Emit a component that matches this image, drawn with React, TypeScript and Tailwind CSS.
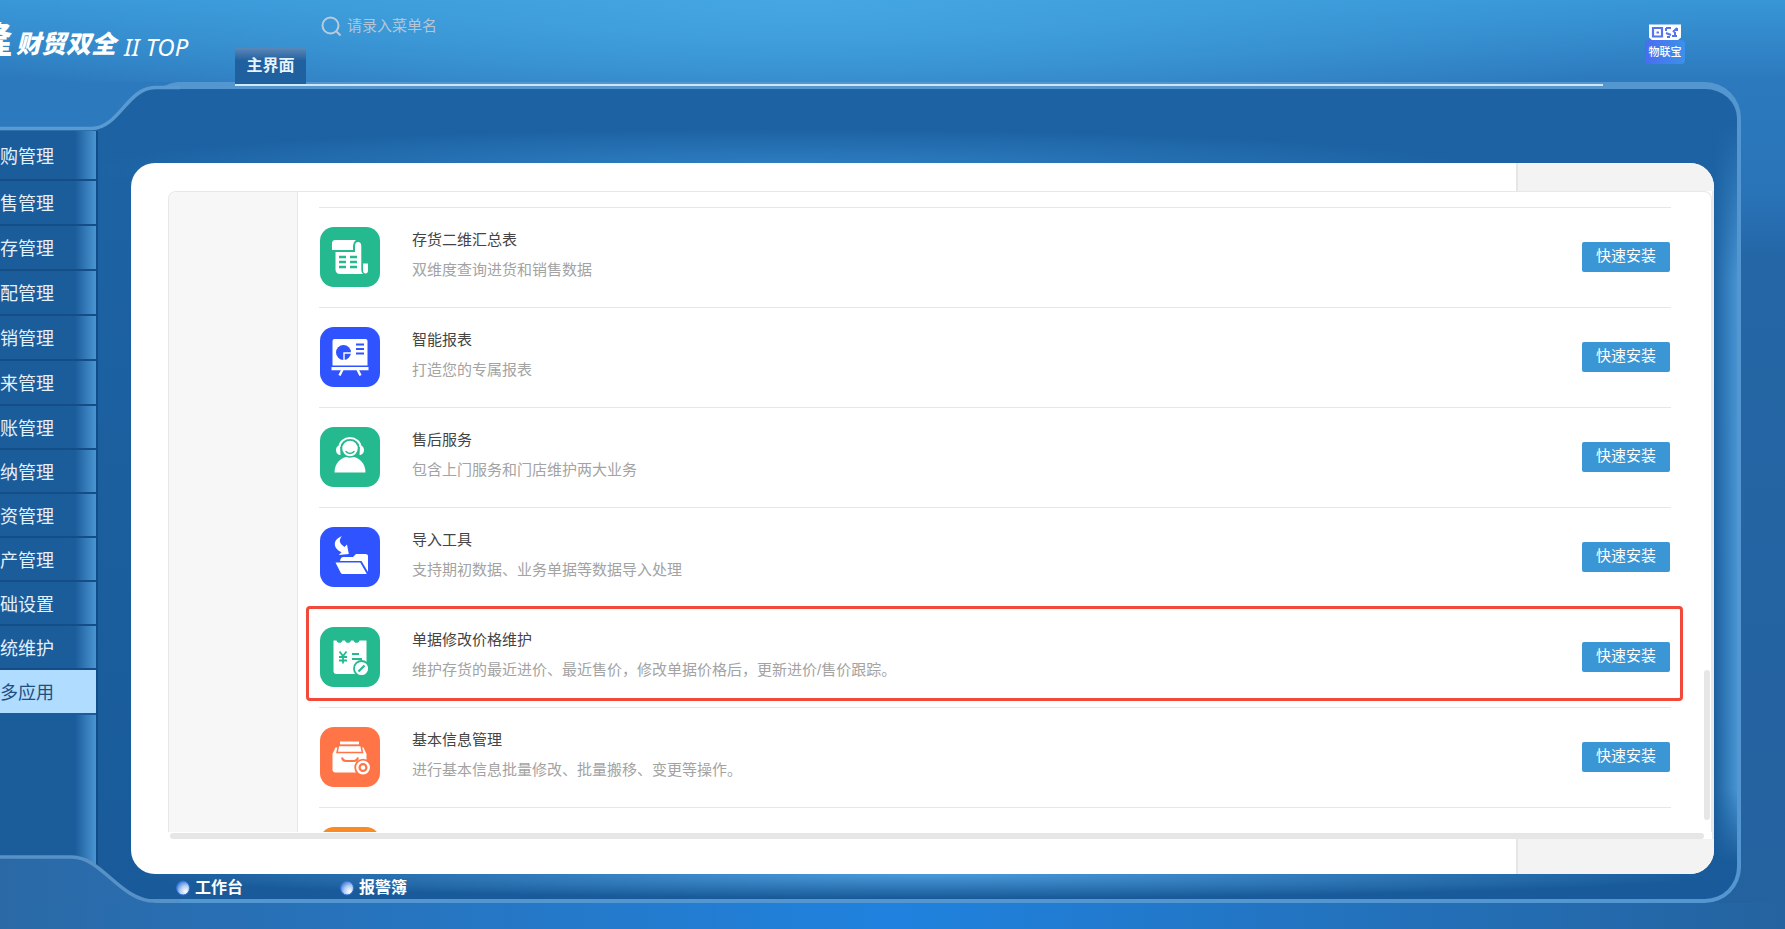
import React from 'react';

interface AppItem {
  name: string;
  desc: string;
  color: string;
  icon: React.ReactNode;
  highlighted?: boolean;
}

const menuItems = [
  { label: '购管理', height: 'h-[50px]' },
  { label: '售管理', height: 'h-[45px]' },
  { label: '存管理', height: 'h-[45px]' },
  { label: '配管理', height: 'h-[45px]' },
  { label: '销管理', height: 'h-[45px]' },
  { label: '来管理', height: 'h-[45px]' },
  { label: '账管理', height: 'h-11' },
  { label: '纳管理', height: 'h-11' },
  { label: '资管理', height: 'h-11' },
  { label: '产管理', height: 'h-11' },
  { label: '础设置', height: 'h-11' },
  { label: '统维护', height: 'h-11' },
  { label: '多应用', height: 'h-[45px]', active: true },
];

const ReceiptIcon = () => (
  <svg viewBox="0 0 60 60" className="size-full" fill="#fff" aria-hidden="true">
    <path d="M15 13h21c-2 1.500-3 4-3 6.500V23H12v-6.500c0-2 1-3.500 3-3.500z" />
    <path d="M35 23v-4c0-2.500 1-4 3-4s3.300 1.500 3.300 4v23.500c0 2 .7 3.500 1.700 4.500H20c-2.800 0-4.500-1.700-4.500-4.500V25H35z" />
    <path d="M43 36.500h5v7c0 2-1 3-2.500 3S43 45.500 43 43.500z" />
    <path d="M19 30h7M30 30h7M19 35h7M30 35h7M19 40h7M30 40h7" stroke="#24b98f" strokeWidth="2.400" />
  </svg>
);

const ReportIcon = () => (
  <svg viewBox="0 0 60 60" className="size-full" fill="#fff" aria-hidden="true">
    <path d="M14.500 12h31a2 2 0 0 1 2 2v24.500h-35V14a2 2 0 0 1 2-2z" />
    <path d="M11.500 40h37v3.200h-37z" />
    <path d="M22.500 42.500l-3 6M37.500 42.500l3 6" stroke="#fff" strokeWidth="2.400" />
    <circle cx="23.500" cy="25.500" r="7.500" fill="#2f54ff" />
    <path d="M24 33v-7h8" stroke="#fff" strokeWidth="1.400" fill="none" />
    <path d="M36 17.500h8M36 22h8M36 26.500h8" stroke="#2f54ff" strokeWidth="2" />
  </svg>
);

const ServiceIcon = () => (
  <svg viewBox="0 0 60 60" className="size-full" fill="#fff" aria-hidden="true">
    <path d="M14.500 45.500c0-9 6-16 15.500-16s15.500 7 15.500 16z" />
    <circle cx="30" cy="21.500" r="8.500" stroke="#24b98f" strokeWidth="1.500" />
    <path d="M19.500 20a10.500 9 0 0 1 21 0" fill="none" stroke="#fff" strokeWidth="2" />
    <path d="M20 18.500c-2.500 0-4 2-4 4.500s1.500 5 4.500 5zM40 18.500c2.500 0 4 2 4 4.500s-1.500 5-4.500 5z" />
    <path d="M26 24.500c2 2.500 6 2.500 8 0" fill="none" stroke="#24b98f" strokeWidth="1.500" strokeLinecap="round" />
  </svg>
);

const ImportIcon = () => (
  <svg viewBox="0 0 60 60" className="size-full" fill="#fff" aria-hidden="true">
    <path d="M22 9c-2.500 3-3 5.500-.5 8.500l3 2.500 2.500-2.500 1.800 9.500-10 1 2.700-2.700c-4-2-6.700-4.800-6.700-8.300C14.800 13.500 18 10.500 22 9z" />
    <path d="M20 34c.5-2.800 1.500-4 3.500-4h9.500l3-3h9.500c1.500 0 2.500.8 2.500 2.300V45l-6.500-11z" />
    <path d="M15.500 35.500h24.800l6.500 11.500H23c-1.200 0-1.800-.5-2.300-1.300z" />
  </svg>
);

const PriceIcon = () => (
  <svg viewBox="0 0 60 60" className="size-full" fill="#fff" aria-hidden="true">
    <path d="M13.500 13.500h3c.5 1.500 1.500 2.300 3 2.300s2.500-.8 3-2.300h2.500c.5 1.500 1.500 2.300 3 2.300s2.500-.8 3-2.300h2.500c.5 1.500 1.500 2.300 3 2.300s2.500-.8 3-2.300H46.500V47h-30c-2 0-3-1-3-3z" />
    <path d="M19.500 24.500l3.500 4.500 3.500-4.500M23 29v7.500M19 30h8M19 33.500h8" stroke="#24b98f" strokeWidth="1.800" fill="none" />
    <path d="M32 27h7M32 32h10" stroke="#24b98f" strokeWidth="2.200" />
    <circle cx="41.500" cy="41.500" r="7.500" stroke="#24b98f" strokeWidth="1.800" />
    <path d="M38.500 44.500l6-6" stroke="#24b98f" strokeWidth="2.200" />
  </svg>
);

const ArchiveIcon = () => (
  <svg viewBox="0 0 60 60" className="size-full" fill="#fff" aria-hidden="true">
    <path d="M20 14.500h19V17.500H20z" />
    <path d="M12.500 27l3-6.500h28l3 6.500v18.500h-31c-2 0-3-1-3-3z" />
    <path d="M18.500 18.500h22.500l1.500 7H17z" stroke="#ff7547" strokeWidth="1.500" />
    <path d="M22 30.500c.5 2.500 2 3.500 4 3.500h8c2 0 3.500-1 4-3.500" fill="none" stroke="#ff7547" strokeWidth="2" />
    <circle cx="43" cy="40.500" r="7.800" stroke="#ff7547" strokeWidth="1.800" />
    <circle cx="43" cy="40.500" r="3.400" fill="none" stroke="#ff7547" strokeWidth="2.200" />
  </svg>
);

const apps: AppItem[] = [
  { name: '存货二维汇总表', desc: '双维度查询进货和销售数据', color: 'bg-[#24b98f]', icon: <ReceiptIcon /> },
  { name: '智能报表', desc: '打造您的专属报表', color: 'bg-[#2f54ff]', icon: <ReportIcon /> },
  { name: '售后服务', desc: '包含上门服务和门店维护两大业务', color: 'bg-[#24b98f]', icon: <ServiceIcon /> },
  { name: '导入工具', desc: '支持期初数据、业务单据等数据导入处理', color: 'bg-[#2f54ff]', icon: <ImportIcon /> },
  {
    name: '单据修改价格维护',
    desc: '维护存货的最近进价、最近售价，修改单据价格后，更新进价/售价跟踪。',
    color: 'bg-[#24b98f]',
    icon: <PriceIcon />,
    highlighted: true,
  },
  { name: '基本信息管理', desc: '进行基本信息批量修改、批量搬移、变更等操作。', color: 'bg-[#ff7547]', icon: <ArchiveIcon /> },
];

const Header = () => (
  <header className="flex h-[82px] shrink-0 items-start">
    <div className="flex h-[82px] w-[235px] shrink-0 items-center overflow-hidden pt-2 whitespace-nowrap text-white">
      <span className="-ml-6 pb-2 text-4xl font-black">隆</span>
      <span className="ml-1 text-[25px] font-black italic">财贸双全</span>
      <span className="ml-2 pt-1 font-['Noto_Sans',sans-serif] text-2xl italic">II TOP</span>
    </div>
    <button className="z-10 mt-12 h-[38px] w-[71px] shrink-0 border-b-2 border-[#d3e8f8] bg-linear-to-b from-[#5a88b8] via-[#21609f] via-35% to-[#1f609f] text-base font-bold text-[#e6f2fc]">
      主界面
    </button>
    <label className="mt-3 ml-[15px] flex h-7 items-center gap-[5px]">
      <svg viewBox="0 0 21 21" className="size-[21px]" fill="none" stroke="#b9cbdc" strokeWidth="2" aria-hidden="true">
        <circle cx="9.500" cy="9.500" r="8" />
        <path d="M15.500 15.500l4 4" />
      </svg>
      <input
        type="text"
        aria-label="菜单名"
        placeholder="请录入菜单名"
        className="w-60 bg-transparent text-[15px] text-white outline-none placeholder:text-[#b3c6d9]"
      />
    </label>
    <button className="mt-6 mr-[100px] ml-auto flex h-10 w-10 flex-col items-center" aria-label="物联宝">
      <svg viewBox="0 0 32 16" className="h-4 w-8 shrink-0" aria-hidden="true">
        <path d="M0 .5h32v13l-3 2.500H3L0 13.500z" fill="#fff" />
        <path d="M4 4h9v8.500H4z" fill="none" stroke="#5873ee" strokeWidth="2.200" />
        <path d="M7.500 7.500h2.500v2H7.500z" fill="#5873ee" />
        <path d="M17 4h5M17 4v3M24 8l4-4M28 4v3M17 9l5 2M18 13h3M23 12h5M26 8v5" fill="none" stroke="#5873ee" strokeWidth="2" />
      </svg>
      <span className="flex h-6 w-10 items-center justify-center rounded-sm bg-linear-to-r from-[#4a6cf0] to-[#3b90ea] text-[11px] font-medium text-white">
        物联宝
      </span>
    </button>
  </header>
);

const Sidebar = () => (
  <nav className="relative mt-[49px] mb-1 flex w-[98px] shrink-0 flex-col border-r-2 border-[#124c86] bg-linear-to-r from-[#1b5c9b] from-78% to-[#4a96d2]">
    {menuItems.map(item => (
      <a
        key={item.label}
        href="#"
        className={`flex shrink-0 items-center border-b-2 pt-1 text-[18px] ${item.height} ${
          item.active ? 'border-[#1d5c9b] bg-[#b0dcff] text-[#1f4f82]' : 'border-[#154d87] text-[#e4f0fb]'
        }`}
      >
        {item.label}
      </a>
    ))}
  </nav>
);

const InstallRow = ({ item }: { item: AppItem }) => (
  <li className="relative flex h-[100px] shrink-0 items-center border-t border-[#e6e6e6] px-px pb-px">
    {item.highlighted && (
      <div className="pointer-events-none absolute -top-0.5 -right-3 -left-[13px] h-[95px] rounded-sm border-3 border-[#f2493d]" />
    )}
    <div className={`size-[60px] rounded-[14px] ${item.color}`}>{item.icon}</div>
    <div className="ml-8 flex-1 pb-1 text-[15px] leading-[30px]">
      <h3 className="text-[#444]">{item.name}</h3>
      <p className="text-[#a3a3a3]">{item.desc}</p>
    </div>
    <button className="h-[30px] w-[88px] rounded-xs bg-[#3b96d6] pb-0.5 text-[15px] text-white">快速安装</button>
  </li>
);

const BottomLink = ({ label }: { label: string }) => (
  <a href="#" className="flex w-[164px] items-center gap-[5px] text-base font-bold text-white">
    <svg viewBox="0 0 14 16" className="h-4 w-3.5" aria-hidden="true">
      <defs>
        <radialGradient id="orb" cx="0.7" cy="0.75" r="0.8">
          <stop offset="0" stopColor="#fff" />
          <stop offset="0.5" stopColor="#b5cff0" />
          <stop offset="1" stopColor="#3c78d8" />
        </radialGradient>
      </defs>
      <ellipse cx="7" cy="8" rx="6.500" ry="7" fill="url(#orb)" stroke="#2f6fd8" />
    </svg>
    {label}
  </a>
);

export default function App() {
  return (
    <div className="flex h-screen flex-col overflow-hidden bg-[radial-gradient(ellipse_900px_150px_at_45%_0,#44a6e2,transparent),linear-gradient(to_bottom,#3896d6_0,#2c79bd_82px,#2974b8_190px,#2466a6_260px,#24619f_100%)] font-['Liberation_Sans','Noto_Sans_CJK_SC',sans-serif]">
      <Header />
      <div className="relative mr-11 flex min-h-0 flex-1">
        {/* dark body of the frame with its light rim */}
        <div className="absolute inset-0 rounded-r-[36px] border-t-7 border-r-4 border-b-4 border-[#5396d0] bg-[radial-gradient(ellipse_700px_40px_at_45%_80px,#2f80c4,transparent),linear-gradient(to_bottom,#1d63a4,#195b9a)]" />
        <div className="absolute top-10 right-1 bottom-10 w-6 bg-linear-to-l from-[#4793d1] to-transparent [mask-image:linear-gradient(to_bottom,transparent,#000_160px,#000_90%,transparent)]" />
        <div className="absolute top-0.5 right-[138px] left-[235px] h-0.5 bg-[#cfe6f7]" />
        <Sidebar />
        <svg viewBox="0 0 180 50" className="absolute top-0 left-0 h-[50px] w-[180px]" aria-hidden="true">
          <path d="M0 0H180C168 0 168 5 155 5C128 5 118 46 92 46H0z" fill="#2c79bd" />
          <path d="M0 46.500H92C118 46.500 128 5.500 155 5.500H180" fill="none" stroke="#5a9ad2" strokeWidth="3.500" />
        </svg>
        <svg viewBox="0 0 180 50" className="absolute bottom-0 left-0 h-[50px] w-[180px]" aria-hidden="true">
          <defs>
            <linearGradient id="baseFill" x1="0" y1="0" x2="180" y2="0" gradientUnits="userSpaceOnUse">
              <stop offset="0" stopColor="#2a69a6" />
              <stop offset="1" stopColor="#2a6eb1" />
            </linearGradient>
          </defs>
          <path d="M0 4H72C102 4 120 48 155 48V50H0z" fill="url(#baseFill)" />
          <path d="M0 4H72C102 4 120 48 155 48H180" fill="none" stroke="#5791c5" strokeWidth="3.500" />
        </svg>
        <main className="relative flex min-w-0 flex-1 flex-col pt-[81px] pr-[27px] pb-1 pl-[33px]">
          <div className="flex min-h-0 flex-1 flex-col overflow-hidden rounded-3xl bg-white">
            <div className="flex h-7 shrink-0 justify-end">
              <div className="w-[198px] border-l-2 border-[#e6e6e6] bg-[#f3f3f3]" />
            </div>
            <div className="flex min-h-0 flex-1 flex-col border-r-2 border-[#e9e9e9] pl-[37px]">
              <div className="flex min-h-0 flex-1 rounded-t-lg border border-b-0 border-[#e8e8e8]">
                <div className="w-[129px] shrink-0 rounded-tl-lg border-r border-[#e8e8e8] bg-[#f7f7f7]" />
                <ul className="mt-[15px] ml-[21px] flex min-w-0 flex-1 flex-col [clip-path:inset(0_-20px)]">
                  {apps.map(item => (
                    <InstallRow key={item.name} item={item} />
                  ))}
                  <li className="flex min-h-0 flex-1 overflow-hidden border-t border-[#e6e6e6] px-px pt-[19px]">
                    <div className="size-[60px] shrink-0 rounded-[14px] bg-[#f98a25]" />
                  </li>
                </ul>
                <div className="mr-px ml-[33px] flex w-1.5 shrink-0 flex-col justify-end pb-3">
                  <div className="h-[150px] rounded-full bg-[#e6e6e6]" />
                </div>
              </div>
              <div className="mt-px mr-2 ml-0.5 h-1.5 shrink-0 rounded-full bg-[#e6e6e6]" />
            </div>
            <div className="flex h-[35px] shrink-0 justify-end">
              <div className="w-[198px] border-l-2 border-[#e6e6e6] bg-[#f3f3f3]" />
            </div>
          </div>
          <div className="flex h-[25px] shrink-0 items-center bg-[radial-gradient(ellipse_50%_24px_at_50%_0,#4a9ada,transparent)] pt-0.5 pl-[45px]">
            <BottomLink label="工作台" />
            <BottomLink label="报警簿" />
          </div>
        </main>
      </div>
      <footer className="h-[26px] shrink-0 bg-linear-to-r from-[#2a69a6] via-[#1f82de] to-[#24639f]" />
    </div>
  );
}
